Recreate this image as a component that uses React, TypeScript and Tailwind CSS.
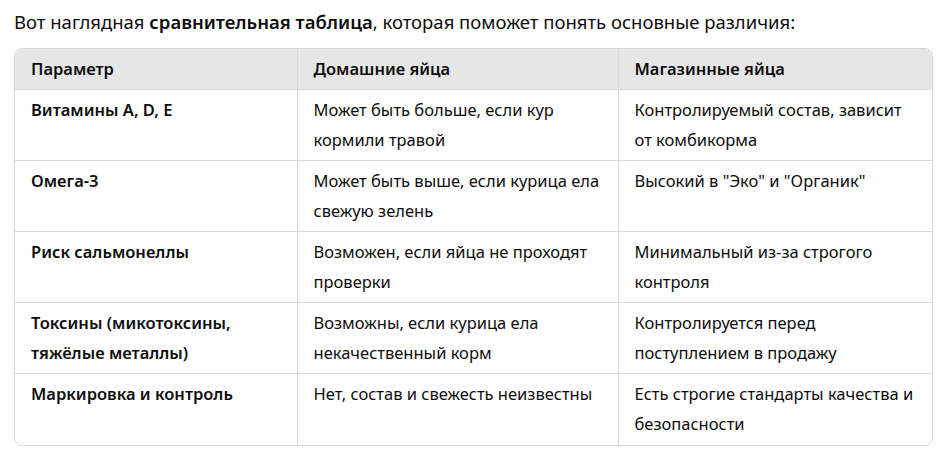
const rows: [string, string, string][] = [
  ["Витамины A, D, E", "Может быть больше, если кур кормили травой", "Контролируемый состав, зависит от комбикорма"],
  ["Омега-3", "Может быть выше, если курица ела свежую зелень", "Высокий в \"Эко\" и \"Органик\""],
  ["Риск сальмонеллы", "Возможен, если яйца не проходят проверки", "Минимальный из-за строгого контроля"],
  ["Токсины (микотоксины, тяжёлые металлы)", "Возможны, если курица ела некачественный корм", "Контролируется перед поступлением в продажу"],
  ["Маркировка и контроль", "Нет, состав и свежесть неизвестны", "Есть строгие стандарты качества и безопасности"],
];

export default function App() {
  return (
    <div className="min-h-screen bg-white px-[14px] pt-[7px] leading-[30px] text-[#0d0d0d] font-['Noto_Sans',sans-serif]">
      <p className="mb-[11px] text-[18.5px]">
        Вот наглядная <strong className="font-semibold">сравнительная таблица</strong>, которая поможет понять основные различия:
      </p>

      <div className="w-[919px] overflow-hidden rounded-lg border border-[#d9d9d9] text-[16.5px]">
        <table className="w-full table-fixed border-collapse text-left">
          <colgroup>
            <col className="w-[282px]" />
            <col className="w-[321px]" />
            <col />
          </colgroup>
          <thead>
            <tr className="bg-[#e6e6e6]">
              <th className="px-4 py-[5px] font-semibold">Параметр</th>
              <th className="border-l border-[#d9d9d9] px-4 py-[5px] font-semibold">Домашние яйца</th>
              <th className="border-l border-[#d9d9d9] px-4 py-[5px] font-semibold">Магазинные яйца</th>
            </tr>
          </thead>
          <tbody>
            {rows.map(([param, home, store]) => (
              <tr key={param} className="h-[71px] border-t border-[#d9d9d9] align-top">
                <td className="px-4 py-[5px] font-semibold">{param}</td>
                <td className="border-l border-[#d9d9d9] px-4 py-[5px]">{home}</td>
                <td className="border-l border-[#d9d9d9] px-4 py-[5px]">{store}</td>
              </tr>
            ))}
          </tbody>
        </table>
      </div>
    </div>
  );
}
